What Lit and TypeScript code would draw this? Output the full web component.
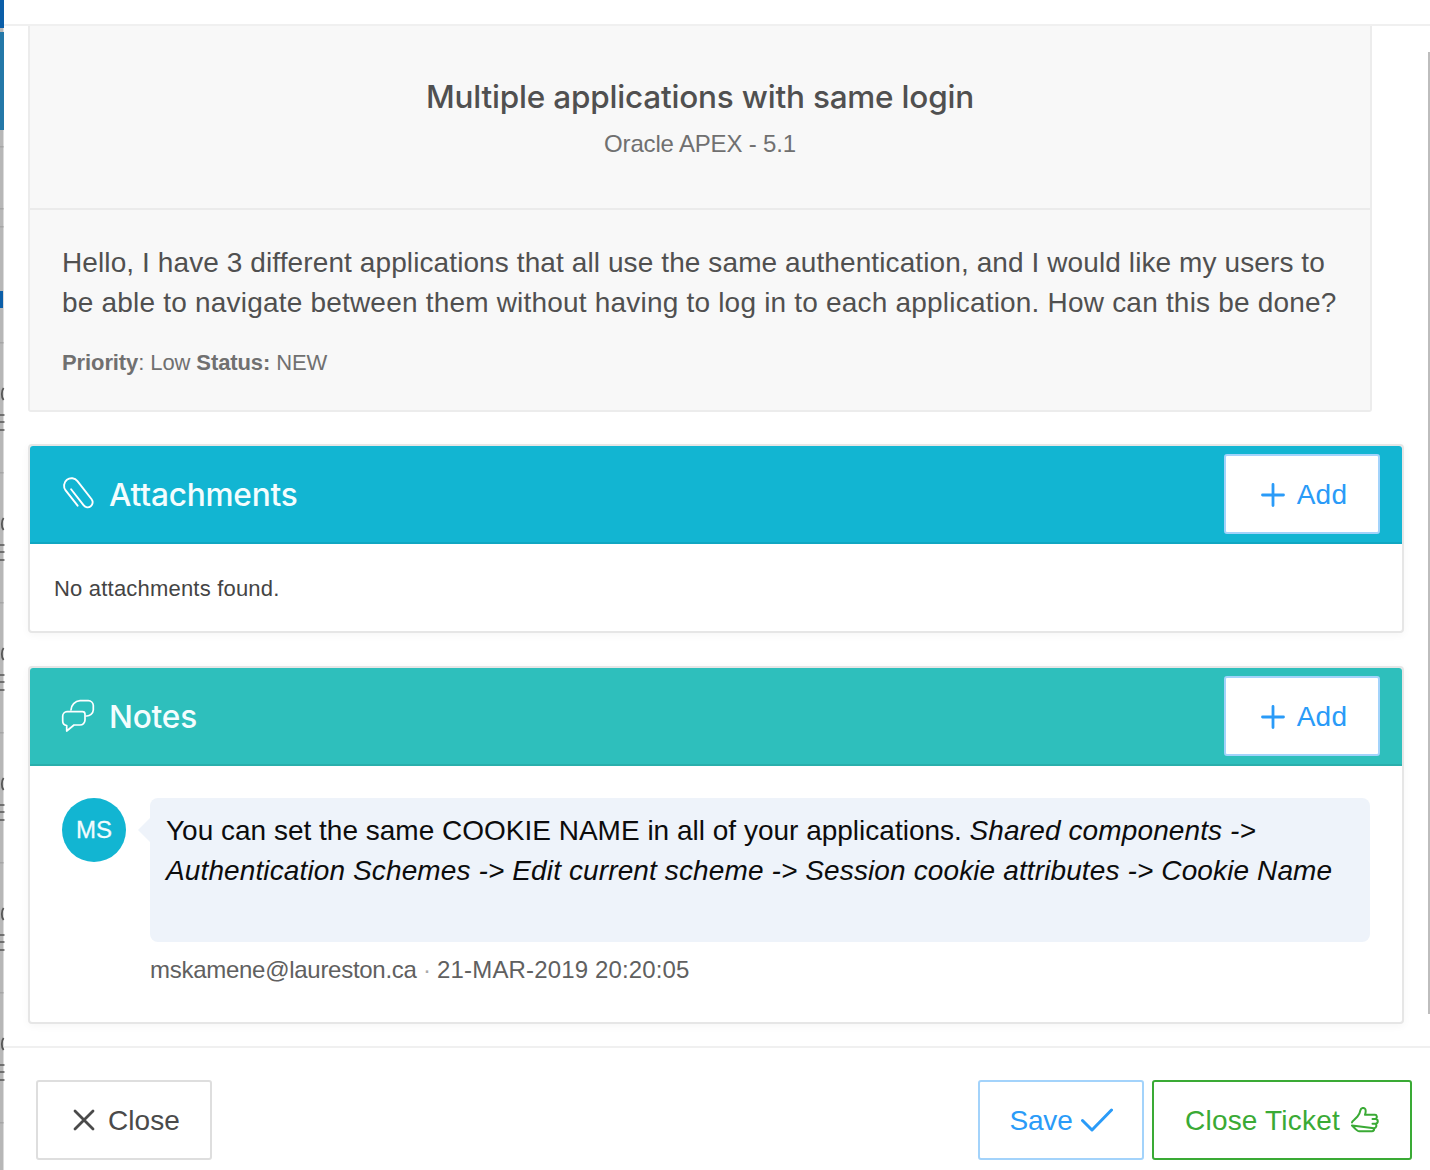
import { LitElement, html, css, svg } from "lit";
import { customElement } from "lit/decorators.js";

const plus = html`<svg class="ic" width="24" height="24" viewBox="0 0 24 24"><path d="M12 1.5v21M1.5 12h21" fill="none" stroke="currentColor" stroke-width="2.8" stroke-linecap="round"/></svg>`;

const marks = [388, 518, 648, 778, 908, 1038];

@customElement("app-root")
export class AppRoot extends LitElement {
  static styles = css`
    :host { display: block; width: 1430px; height: 1170px; overflow: hidden; background: #fff; position: relative;
      font-family: "Liberation Sans", Arial, sans-serif; color: #4d4d4d; }
    * { box-sizing: border-box; }
    .backdrop { position: absolute; left: 0; top: 0; }
    .track { position: absolute; right: 0; top: 52px; width: 2px; height: 962px; background: #bdbdbd; }
    .modal { display: flex; flex-direction: column; height: 1170px; margin-left: 4px; }
    .top { flex: 0 0 26px; border-bottom: 2px solid #f0f0f0; }
    .body { flex: 1; padding: 0 26px 0 24px; }
    .ticket { width: 1344px; background: #f8f8f8; border: 2px solid #ececec; border-top: 0; border-radius: 0 0 3px 3px; }
    .head { height: 184px; padding-top: 51px; text-align: center; border-bottom: 2px solid #ebebeb; }
    h1 { margin: 0; font-family: Inter, "Liberation Sans", sans-serif; font-size: 31.5px; line-height: 40px; font-weight: 500; color: #505050; letter-spacing: -.2px; }
    .sub { margin-top: 11px; font-size: 24px; line-height: 32px; color: #707070; letter-spacing: -.17px; }
    .desc { padding: 33px 32px 32px; }
    .desc p { margin: 0; font-size: 28px; line-height: 40px; color: #505050; }
    .desc p span { display: block; white-space: nowrap; }
    .l1 { letter-spacing: .1px; }
    .l2 { letter-spacing: .2px; }
    .meta { margin-top: 25px; font-size: 22px; line-height: 30px; color: #707070; letter-spacing: -.1px; }
    .panel { width: 1376px; border: 2px solid #e6e6e6; border-radius: 4px; background: #fff; box-shadow: 0 2px 8px rgba(0,0,0,.04); }
    .p1 { margin-top: 32px; }
    .p2 { margin-top: 33px; }
    .bar { height: 98px; display: flex; align-items: center; padding: 0 22px 0 32px; color: #fff; border-bottom: 2px solid; border-radius: 3px 3px 0 0; }
    .att { background: #12b5d2; border-color: #10a7c2; }
    .not { background: #2ebfbc; border-color: #2aafac; }
    .bar svg.big { margin-right: 16px; flex: none; overflow: visible; }
    .title { font-family: Inter, "Liberation Sans", sans-serif; font-weight: 500; font-size: 31.6px; flex: 1; color: #f4fdfe; letter-spacing: -.2px; margin-left: -1px; }
    .add { width: 156px; height: 80px; background: #fff; border: 2px solid #a3d3fb; border-radius: 3px; color: #2a9bf8; display: flex; align-items: center; justify-content: center; gap: 12px; font-size: 28px; padding: 1px 0 0 4px; letter-spacing: .3px; }
    .empty { height: 87px; padding: 31px 24px 0; font-size: 22px; line-height: 28px; color: #444; letter-spacing: .2px; }
    .note { display: flex; padding: 32px 32px 0; height: 256px; }
    .av { flex: none; width: 64px; height: 64px; border-radius: 50%; background: #12b5d2; color: #f2fcfe; display: flex; align-items: center; justify-content: center; font-size: 24px; margin-right: 24px; -webkit-text-stroke: .3px #f2fcfe; }
    .nb { flex: 1; }
    .bubble { position: relative; height: 144px; background: #eef3fa; border-radius: 8px; padding: 13px 16px; font-size: 28px; line-height: 40px; color: #0c0c0c; }
    .bubble em { letter-spacing: .12px; }
    .bubble::before { content: ""; position: absolute; left: -12px; top: 20px; border: 12px solid transparent; border-left: 0; border-right-color: #eef3fa; }
    .who { margin-top: 13px; font-size: 24px; line-height: 30px; color: #606060; letter-spacing: -.28px; }
    .who i { font-style: normal; color: #aaa; }
    .who span { letter-spacing: .15px; }
    .foot { flex: 0 0 124px; border-top: 2px solid #f0f0f0; display: flex; align-items: flex-start; padding: 32px 18px 0 32px; gap: 8px; }
    .btn { height: 80px; border-radius: 3px; background: #fff; border: 2px solid; display: flex; align-items: center; justify-content: center; font-size: 28px; letter-spacing: .1px; padding-top: 2px; }
    .close { width: 176px; border-color: #dedede; color: #4a4a4a; gap: 12px; margin-right: auto; padding-left: 4px; }
    .save { width: 166px; border-color: #a3d3fb; color: #2a9bf8; gap: 8px; letter-spacing: -.2px; }
    .tick { width: 260px; border-color: #3aaa35; color: #3aaa35; gap: 9px; letter-spacing: .2px; }
    .btn svg { margin-top: -2px; }
  `;

  render() {
    return html`
      <svg class="backdrop" width="6" height="1170" viewBox="0 0 6 1170">
        <rect x="0" y="0" width="3.5" height="1170" fill="#b7b7b7"/>
        <rect x="0" y="0" width="4" height="28" fill="#0b5ea8"/>
        <rect x="0" y="32" width="4" height="98" fill="#2478a8"/>
        <rect x="0" y="291" width="3" height="17" fill="#0b5ea8"/>
        ${[146, 208, 226, 342, 472, 602, 732, 862, 992, 1122].map(y => svg`<rect x="0" y="${y}" width="3.5" height="1.5" fill="#a5a5a5"/>`)}
        ${marks.map(y => svg`
          <path d="M3.6 ${y}C1.2 ${y + 3} 1.2 ${y + 9} 3.6 ${y + 12}" fill="none" stroke="#555" stroke-width="1.8"/>
          <path d="M0 ${y + 27}h4.5M0 ${y + 34}h4.5M0 ${y + 42}h4.5" stroke="#555" stroke-width="1.5"/>
        `)}
      </svg>
      <div class="track"></div>
      <div class="modal">
        <div class="top"></div>
        <div class="body">
          <div class="ticket">
            <div class="head">
              <h1>Multiple applications with same login</h1>
              <div class="sub">Oracle APEX - 5.1</div>
            </div>
            <div class="desc">
              <p><span class="l1">Hello, I have 3 different applications that all use the same authentication, and I would like my users to</span><span class="l2">be able to navigate between them without having to log in to each application. How can this be done?</span></p>
              <div class="meta"><b>Priority</b>: Low <b>Status:</b> NEW</div>
            </div>
          </div>
          <div class="panel p1">
            <div class="bar att">
              <svg class="big" width="32" height="32" viewBox="0 0 32 32" fill="none" stroke="currentColor" stroke-width="1.9" stroke-linecap="round" stroke-linejoin="round"><g transform="rotate(-38 16 16)"><path d="M13.5 8V28.5a5 5 0 0 0 10 0V5.5a7.5 7.5 0 0 0-15 0V25"/></g></svg>
              <span class="title">Attachments</span>
              <div class="add">${plus}<span>Add</span></div>
            </div>
            <div class="empty">No attachments found.</div>
          </div>
          <div class="panel p2">
            <div class="bar not">
              <svg class="big" width="32" height="32" viewBox="0 0 32 32" fill="none" stroke="currentColor" stroke-width="1.7" stroke-linecap="round" stroke-linejoin="round"><path d="M5 11.7H20.5a2.5 2.5 0 0 1 2.5 2.5V20a5 5 0 0 1-5 5H12L4.7 31V25.5A4.5 4.5 0 0 1 .7 21V16a4.4 4.4 0 0 1 4.3-4.3Z"/><path d="M9 10a9.5 9.5 0 0 1 9-9.3h8.3a5 5 0 0 1 5 4.6V10a6.5 6.5 0 0 1-7 6"/></svg>
              <span class="title">Notes</span>
              <div class="add">${plus}<span>Add</span></div>
            </div>
            <div class="note">
              <div class="av">MS</div>
              <div class="nb">
                <div class="bubble">You can set the same COOKIE NAME in all of your applications. <em>Shared components -&gt; Authentication Schemes -&gt; Edit current scheme -&gt; Session cookie attributes -&gt; Cookie Name</em></div>
                <div class="who">mskamene@laureston.ca <i>·</i> <span>21-MAR-2019 20:20:05</span></div>
              </div>
            </div>
          </div>
        </div>
        <div class="foot">
          <div class="btn close"><svg width="24" height="24" viewBox="0 0 24 24"><path d="M3 3l18 18M21 3 3 21" stroke="currentColor" stroke-width="2.8" stroke-linecap="round"/></svg><span>Close</span></div>
          <div class="btn save"><span>Save</span><svg width="32" height="24" viewBox="0 0 32 24" fill="none"><path d="M1.5 12.5 11 22 30.5 2" stroke="currentColor" stroke-width="3" stroke-linecap="round" stroke-linejoin="round"/></svg></div>
          <div class="btn tick"><span>Close Ticket</span><svg width="30" height="27" viewBox="0 0 30 27" fill="none" stroke="currentColor" stroke-width="2" stroke-linejoin="round" stroke-linecap="round"><path d="M3 15.5C3 14.5 4 13.8 5 13L8.5 9.5C10 8 11 5.5 11.5 3 12 .8 15 .3 16.2 2 17.3 3.5 16.5 6 16 7.8H26C28 7.8 28.5 10.5 26.8 12H23.5M26.8 12C29.5 12.3 29.5 16.5 26.5 16.8H23.5M26.5 16.8C28 18 27.5 21 25 21.3H23.5M25 21.3C25.5 23 24.5 24.3 23 24.3H10C8.5 24.3 8 23 6.5 22L3 18.5Z"/></svg></div>
        </div>
      </div>
    `;
  }
}
